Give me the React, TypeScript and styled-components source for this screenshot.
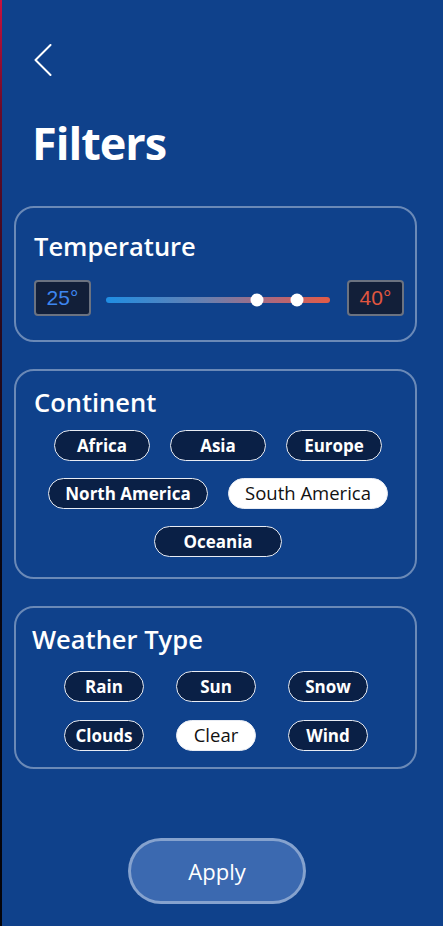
import React from "react";
import styled, { createGlobalStyle } from "styled-components";

const GlobalStyle = createGlobalStyle`
  html, body {
    margin: 0;
    padding: 0;
    background: #0f418b;
  }
  * { box-sizing: border-box; }
`;

const Page = styled.div`
  min-height: 100vh;
  background: #0f418b;
  border-left: 2px solid;
  border-image: linear-gradient(to bottom, #c8123f 0%, #6a0b2a 12%, #2a0a1e 35%, #0a0610 60%, #04040a 100%) 1;
  padding: 44px 26px 20px 12px;
  display: flex;
  flex-direction: column;
  font-family: "Open Sans", "Noto Sans", sans-serif;
  color: #fff;
`;

const BackButton = styled.button`
  align-self: flex-start;
  margin-left: 20px;
  width: 18px;
  height: 32px;
  padding: 0;
  border: none;
  background: transparent;
  display: flex;
  cursor: pointer;
`;

const Title = styled.h1`
  margin: 40px 0 35px 18px;
  font-size: 45px;
  line-height: 1.22;
  font-weight: 700;
  letter-spacing: -1px;
`;

const Cards = styled.div`
  display: flex;
  flex-direction: column;
  gap: 27px;
`;

const Card = styled.section<{ $pad: string }>`
  border: 2px solid rgba(255, 255, 255, 0.38);
  border-radius: 20px;
  padding: ${(p) => p.$pad};
  display: flex;
  flex-direction: column;
`;

const CardTitle = styled.h2<{ $gap: number }>`
  margin: 0 0 ${(p) => p.$gap}px 0;
  font-size: 25.5px;
  line-height: 1.22;
  font-weight: 600;
`;

const RangeRow = styled.div`
  display: flex;
  align-items: center;
  gap: 15px;
`;

const TempBox = styled.div<{ $color: string }>`
  width: 57px;
  height: 36px;
  flex: none;
  background: #121f39;
  border: 2px solid #6b7280;
  border-radius: 4px;
  display: flex;
  align-items: center;
  justify-content: center;
  font-family: "Liberation Sans", Arial, sans-serif;
  font-size: 21px;
  color: ${(p) => p.$color};
`;

const Track = styled.div`
  position: relative;
  flex: 1;
  height: 6px;
  margin: 4px 2px 0 0;
  border-radius: 3px;
  background: linear-gradient(90deg, #1f8ee4 0%, #6a7fae 45%, #b0677a 75%, #e35b45 100%);
`;

const Thumb = styled.span`
  position: absolute;
  top: 50%;
  width: 13px;
  height: 13px;
  border-radius: 50%;
  background: #fff;
  transform: translate(-50%, -50%);
`;

const ChipWrap = styled.div`
  display: flex;
  flex-wrap: wrap;
  justify-content: center;
  column-gap: 20px;
  row-gap: 17px;
  padding-left: 5px;
`;

const ChipGrid = styled.div`
  display: grid;
  grid-template-columns: repeat(3, 80px);
  column-gap: 32px;
  row-gap: 18px;
  justify-content: center;
  padding-left: 3px;
`;

const Chip = styled.button<{ $active?: boolean; $w?: number }>`
  width: ${(p) => (p.$w ? `${p.$w}px` : "auto")};
  height: 31px;
  padding: 0;
  border-radius: 999px;
  border: 1px solid #e8ecf4;
  background: ${(p) => (p.$active ? "#ffffff" : "#0a2046")};
  color: ${(p) => (p.$active ? "#111111" : "#ffffff")};
  font-family: "Open Sans", "Noto Sans", sans-serif;
  font-weight: ${(p) => (p.$active ? 500 : 700)};
  font-size: ${(p) => (p.$active ? "18.5px" : "17px")};
  line-height: 1;
  display: flex;
  align-items: center;
  justify-content: center;
  cursor: pointer;
`;

const ApplyButton = styled.button`
  align-self: center;
  margin: 69px 0 0 3px;
  width: 178px;
  height: 66px;
  border-radius: 33px;
  border: 3px solid rgba(255, 255, 255, 0.38);
  background: #3b69b0;
  color: #fff;
  font-family: "Open Sans", "Noto Sans", sans-serif;
  font-size: 22px;
  font-weight: 400;
  cursor: pointer;
`;

const continents: { name: string; w: number; active?: boolean }[] = [
  { name: "Africa", w: 96 },
  { name: "Asia", w: 96 },
  { name: "Europe", w: 96 },
  { name: "North America", w: 160 },
  { name: "South America", w: 160, active: true },
  { name: "Oceania", w: 128 },
];

const weather: { name: string; active?: boolean }[] = [
  { name: "Rain" },
  { name: "Sun" },
  { name: "Snow" },
  { name: "Clouds" },
  { name: "Clear", active: true },
  { name: "Wind" },
];

const thumbs = [67.4, 85.3];

export default function App() {
  return (
    <>
      <GlobalStyle />
      <Page>
        <BackButton aria-label="Back">
          <svg width="18" height="32" viewBox="0 0 18 32" fill="none">
            <polyline points="16.5,1 1.5,16 16.5,31" stroke="#fff" strokeWidth="2" strokeLinecap="round" strokeLinejoin="round" />
          </svg>
        </BackButton>
        <Title>Filters</Title>
        <Cards>
          <Card $pad="23px 11px 24px 18px">
            <CardTitle $gap={18}>Temperature</CardTitle>
            <RangeRow>
              <TempBox $color="#3d86f0">25°</TempBox>
              <Track>
                {thumbs.map((t) => (
                  <Thumb key={t} style={{ left: `${t}%` }} />
                ))}
              </Track>
              <TempBox $color="#e0563f">40°</TempBox>
            </RangeRow>
          </Card>
          <Card $pad="16px 18px 20px 18px">
            <CardTitle $gap={12}>Continent</CardTitle>
            <ChipWrap>
              {continents.map((c) => (
                <Chip key={c.name} $w={c.w} $active={c.active}>
                  {c.name}
                </Chip>
              ))}
            </ChipWrap>
          </Card>
          <Card $pad="16px 18px 16px 16px">
            <CardTitle $gap={16}>Weather Type</CardTitle>
            <ChipGrid>
              {weather.map((c) => (
                <Chip key={c.name} $active={c.active}>
                  {c.name}
                </Chip>
              ))}
            </ChipGrid>
          </Card>
        </Cards>
        <ApplyButton>Apply</ApplyButton>
      </Page>
    </>
  );
}
